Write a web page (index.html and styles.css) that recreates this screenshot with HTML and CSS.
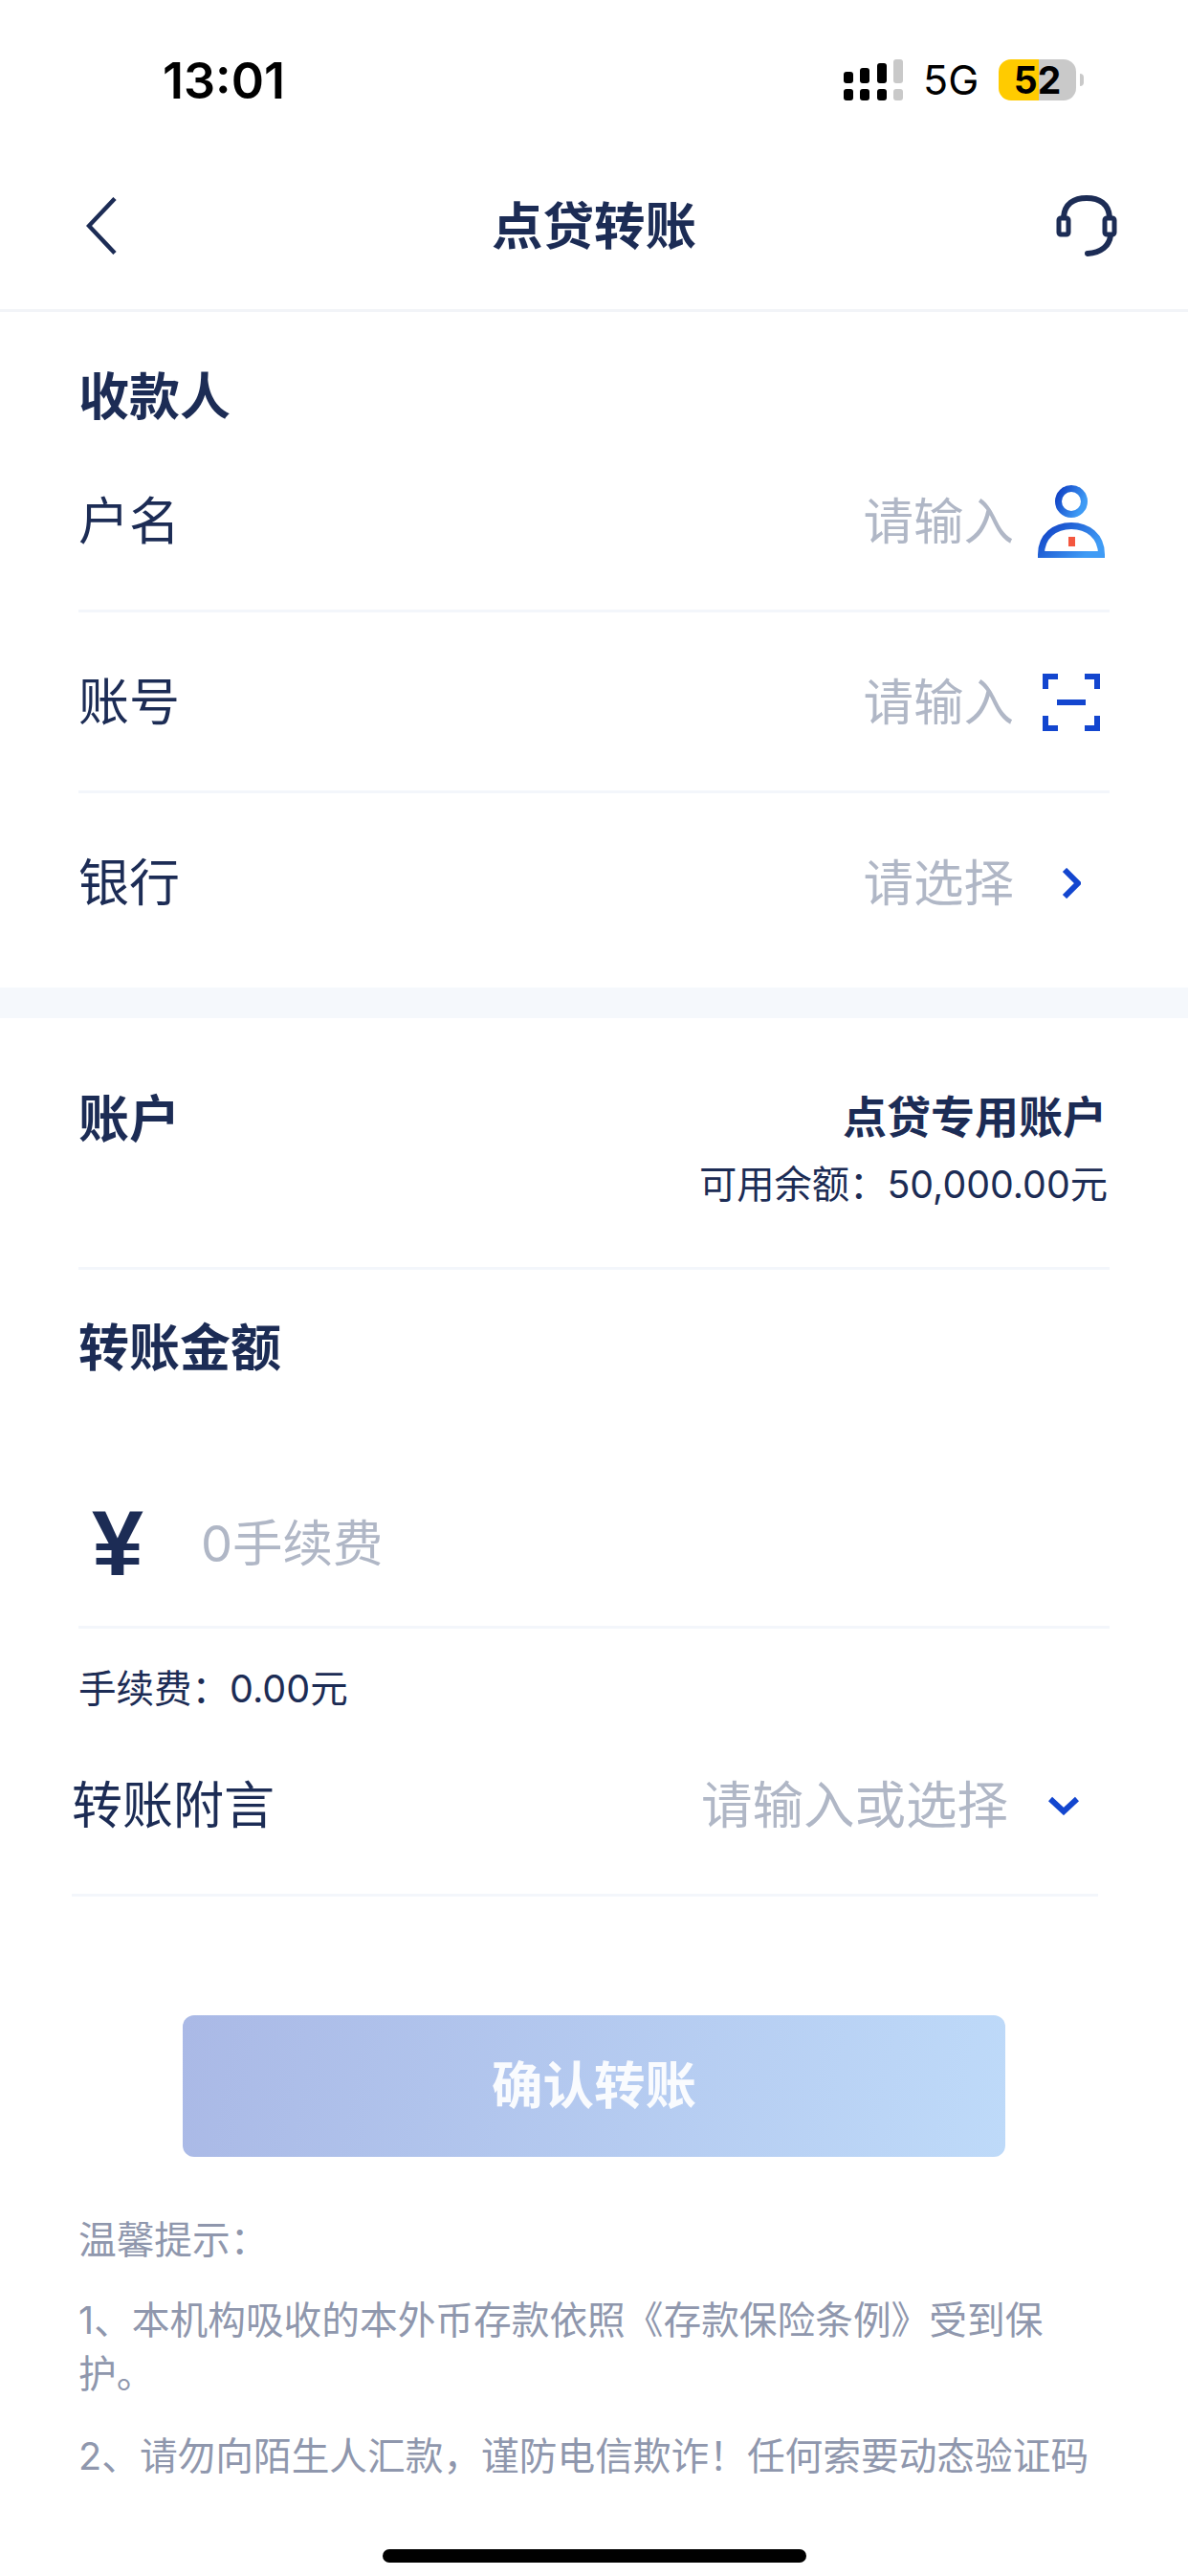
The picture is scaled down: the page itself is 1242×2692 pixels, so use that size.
FILE: index.html
```html
<!DOCTYPE html>
<html lang="zh-CN">
<head>
<meta charset="utf-8">
<title>点贷转账</title>
<link rel="stylesheet" href="styles.css">
</head>
<body>
<div class="page">
  <div class="status">
    <span class="time">13:01</span>
    <div class="status-right">
      <svg class="signal" width="62" height="43" viewBox="0 0 62 43">
        <g fill="#000">
          <rect x="0" y="13" width="10" height="12" rx="3"/><rect x="17" y="9" width="10" height="16" rx="3"/><rect x="35" y="4" width="10" height="21" rx="3"/>
          <rect x="0" y="31" width="10" height="12" rx="3"/><rect x="17" y="31" width="10" height="12" rx="3"/><rect x="35" y="31" width="10" height="12" rx="3"/>
        </g>
        <g fill="#c9c9c9"><rect x="52" y="0" width="10" height="25" rx="3"/><rect x="52" y="31" width="10" height="12" rx="3"/></g>
      </svg>
      <span class="net">5G</span>
      <div class="battery"><span class="battery-num">52</span></div>
      <span class="battery-tip"></span>
    </div>
  </div>

  <div class="nav">
    <svg class="back" width="32" height="60" viewBox="0 0 32 60"><path d="M30 1.500 3 30l27 28.500" fill="none" stroke="#1c2c55" stroke-width="4.500"/></svg>
    <h1 class="nav-title">点贷转账</h1>
    <svg class="headset" width="64" height="64" viewBox="0 0 64 64" fill="none" stroke="#1c2c55">
      <path d="M8 23C9 9 19 3 32 3s23 6 24 20" stroke-width="6"/>
      <rect x="3" y="24" width="10" height="17" rx="2" stroke-width="5"/>
      <rect x="51" y="24" width="10" height="17" rx="2" stroke-width="5"/>
      <path d="M57 42c-1 11-10 18-24 19" stroke-width="6" stroke-linecap="round"/>
    </svg>
  </div>

  <section class="payee">
    <h2 class="heading payee-heading">收款人</h2>
    <div class="row row-name">
      <span class="label">户名</span>
      <span class="placeholder">请输入</span>
      <span class="slot">
        <svg width="70" height="76" viewBox="0 0 70 76" fill="none">
          <defs><linearGradient id="g" x1="0" y1="0" x2="1" y2="0.500"><stop offset="0" stop-color="#0f3fc4"/><stop offset="1" stop-color="#3f9bf5"/></linearGradient></defs>
          <circle cx="35" cy="17" r="13.500" stroke="url(#g)" stroke-width="7"/>
          <path d="M3.500 72.500C3.500 53 18 42.500 35 42.500S66.500 53 66.500 72.500Z" stroke="url(#g)" stroke-width="7"/>
          <rect x="32" y="54" width="7" height="10" fill="#f4573f"/>
        </svg>
      </span>
    </div>
    <div class="row">
      <span class="label">账号</span>
      <span class="placeholder">请输入</span>
      <span class="slot">
        <svg width="60" height="60" viewBox="0 0 60 60" fill="none" stroke="#1346cf" stroke-width="6">
          <path d="M16 3H3v13M44 3h13v13M3 44v13h13M57 44v13H44M15 30h30"/>
        </svg>
      </span>
    </div>
    <div class="row row-last">
      <span class="label">银行</span>
      <span class="placeholder">请选择</span>
      <span class="slot">
        <svg width="20" height="32" viewBox="0 0 20 32" fill="none" stroke="#1346cf" stroke-width="6"><path d="M3 2l14 14L3 30"/></svg>
      </span>
    </div>
  </section>

  <div class="band"></div>

  <section class="transfer">
    <div class="account">
      <h2 class="heading">账户</h2>
      <div class="account-info">
        <div class="account-name">点贷专用账户</div>
        <div class="account-balance">可用余额：50,000.00元</div>
      </div>
    </div>
    <h2 class="heading amount-heading">转账金额</h2>
    <div class="amount">
      <span class="yen">¥</span>
      <span class="placeholder">0手续费</span>
    </div>
    <div class="fee">手续费：0.00元</div>
    <div class="memo">
      <span class="label">转账附言</span>
      <span class="placeholder memo-hint">请输入或选择</span>
      <svg class="memo-arrow" width="32" height="20" viewBox="0 0 32 20" fill="none" stroke="#1346cf" stroke-width="6"><path d="M2 3l14 13L30 3"/></svg>
    </div>
    <div class="submit">确认转账</div>
    <div class="tips">
      <p class="tips-title">温馨提示：</p>
      <p>1、本机构吸收的本外币存款依照《存款保险条例》受到保护。</p>
      <p>2、请勿向陌生人汇款，谨防电信欺诈！任何索要动态验证码</p>
    </div>
  </section>
  <div class="home-bar"></div>
</div>
</body>
</html>
```

FILE: styles.css
```css
* { box-sizing: border-box; }
html, body { margin: 0; padding: 0; background: #fff; }
.page {
  position: relative;
  width: 1242px;
  height: 2692px;
  overflow: hidden;
  background: #fff;
  color: #1c2c55;
  font-family: Inter, "Noto Sans CJK SC", sans-serif;
}
h1, h2, p { margin: 0; }

.status {
  height: 168px;
  padding: 62px 109px 0 170px;
  display: flex;
  justify-content: space-between;
  align-items: flex-start;
  color: #000;
}
.time { font-size: 52px; font-weight: 600; line-height: 46px; }
.status-right { display: flex; align-items: center; height: 43px; }
.signal { display: block; }
.net { margin-left: 21px; font-size: 43px; line-height: 43px; width: 79px; }
.battery {
  position: relative;
  width: 81px;
  height: 43px;
  border-radius: 13px;
  background: linear-gradient(90deg, #ffcb00 0 42px, #c9c9c9 42px);
  text-align: center;
}
.battery-num { font-size: 39px; line-height: 43px; font-weight: 700; display: block; }
.battery-tip {
  width: 4px;
  height: 13px;
  margin-left: 4px;
  border-radius: 0 6px 6px 0;
  background: #c9c9c9;
}

.nav {
  height: 158px;
  padding: 0 74px 20px 90px;
  position: relative;
  display: flex;
  justify-content: space-between;
  align-items: center;
  border-bottom: 3px solid #f2f4f8;
}
.back, .headset { display: block; }
.nav-title {
  position: absolute;
  left: 0;
  right: 0;
  top: 0;
  text-align: center;
  font-size: 53.500px;
  font-weight: 700;
  line-height: 138px;
}

.heading { font-size: 53px; font-weight: 700; line-height: 60px; }
.payee { padding: 59px 82px 0 82px; height: 706px; }
.payee-heading { margin-bottom: 5px; }
.row {
  height: 189.500px;
  padding-top: 2px;
  display: flex;
  align-items: center;
  border-bottom: 3px solid #f3f6fb;
}
.row-name { padding-top: 3px; }
.row-last { border-bottom: 0; padding-top: 0; padding-bottom: 1px; }
.label { font-size: 53px; line-height: 60px; flex: 1; }
.placeholder { font-size: 52.500px; line-height: 60px; color: #b0b7c6; }
.slot {
  width: 70px;
  margin: 0 5px 0 25px;
  display: flex;
  justify-content: center;
}
.slot svg { display: block; }

.band { height: 32px; background: #f5f8fc; }

.transfer { padding: 0 82px; }
.account {
  height: 263px;
  padding-top: 76px;
  display: flex;
  justify-content: space-between;
  align-items: flex-start;
  border-bottom: 3px solid #f3f6fb;
}
.account-info { text-align: right; margin-right: 2px; }
.account-name { font-size: 46px; font-weight: 700; line-height: 54px; margin-right: 1px; }
.account-balance { font-size: 39.300px; line-height: 56px; margin-top: 16px; }
.amount-heading { margin-top: 52px; }
.amount {
  height: 263px;
  padding: 88px 0 0 14px;
  display: flex;
  align-items: center;
  border-bottom: 3px solid #f3f6fb;
}
.yen { font-family: "Liberation Sans", sans-serif; font-size: 97px; font-weight: 700; width: 114px; line-height: 100px; }
.fee { font-size: 39.500px; line-height: 56px; margin-top: 35px; }
.memo {
  height: 187px;
  margin: 2px 12px 0 -7px;
  display: flex;
  align-items: center;
  border-bottom: 3px solid #f3f6fb;
}
.memo-hint { font-size: 53.500px; }
.memo-arrow { margin: 0 20px 0 42px; }
.submit {
  width: 860px;
  height: 148px;
  margin: 124px 0 0 109px;
  border-radius: 12px;
  background: linear-gradient(100deg, #aab9e6, #bedaf9);
  color: rgba(255, 255, 255, 0.92);
  font-size: 53.500px;
  font-weight: 700;
  line-height: 148px;
  text-align: center;
}
.tips { margin-top: 59px; font-size: 39.700px; line-height: 56px; color: #8f97ad; }
.tips p { margin-bottom: 30px; }
.tips .tips-title { margin-bottom: 28px; }
.home-bar {
  position: absolute;
  left: 400px;
  top: 2664px;
  width: 443px;
  height: 14px;
  border-radius: 7px;
  background: #000;
}
```
